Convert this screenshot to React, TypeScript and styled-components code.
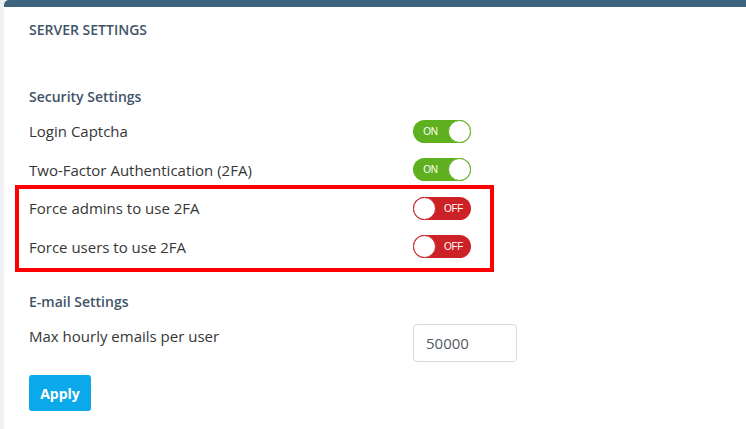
import React from 'react';
import styled, { createGlobalStyle } from 'styled-components';

const GlobalStyle = createGlobalStyle`
  html, body {
    margin: 0;
    padding: 0;
    background: #eef0f1;
  }
  body {
    font-family: 'Open Sans', 'Liberation Sans', sans-serif;
  }
`;

const Page = styled.div`
  width: 746px;
  height: 429px;
  overflow: hidden;
  padding-left: 4px;
  box-sizing: border-box;
`;

const Card = styled.div`
  background: #ffffff;
  border-top: 7px solid #3e6580;
  border-top-left-radius: 5px;
  height: 100%;
  box-sizing: border-box;
  padding: 13px 25px 0 25px;
`;

const Title = styled.h2`
  margin: 0;
  font-size: 14px;
  line-height: 20px;
  font-weight: 600;
  color: #3f5468;
  text-transform: uppercase;
`;

const SectionTitle = styled.h3<{ $gap: number }>`
  margin: ${(p) => p.$gap}px 0 0 0;
  font-size: 14px;
  line-height: 20px;
  font-weight: 600;
  color: #3f5468;
`;

const Rows = styled.div`
  margin-top: 5px;
  display: flex;
  flex-direction: column;
`;

const Row = styled.div`
  display: flex;
  align-items: center;
  height: 38.5px;
`;

const Label = styled.div`
  width: 384px;
  font-size: 15px;
  color: #363636;
`;

const Highlight = styled.div`
  position: relative;

  &::after {
    content: '';
    position: absolute;
    left: -14px;
    top: -4px;
    width: 479px;
    height: 87px;
    border: 4px solid #ff0000;
    box-sizing: border-box;
    pointer-events: none;
  }
`;

const Switch = styled.div<{ $on: boolean }>`
  position: relative;
  width: 58px;
  height: 23px;
  border-radius: 12px;
  background: ${(p) => (p.$on ? '#5fb01e' : '#cc2127')};
  display: flex;
  align-items: center;
  flex-direction: ${(p) => (p.$on ? 'row' : 'row-reverse')};
  box-sizing: border-box;
`;

const SwitchText = styled.span`
  flex: 1;
  text-align: center;
  font-family: 'Liberation Sans', Arial, sans-serif;
  font-size: 10px;
  color: #ffffff;
  letter-spacing: -0.3px;
`;

const Knob = styled.span<{ $on: boolean }>`
  width: 23px;
  height: 23px;
  border-radius: 50%;
  background: #ffffff;
  border: 1px solid ${(p) => (p.$on ? '#5fb01e' : '#cc2127')};
  box-sizing: border-box;
`;

const InputRow = styled.div`
  display: flex;
  align-items: flex-start;
  margin-top: 12px;
`;

const InputLabel = styled(Label)`
  line-height: 20px;
  padding-top: 2px;
`;

const NumberInput = styled.input`
  width: 104px;
  height: 38px;
  box-sizing: border-box;
  border: 1px solid #d4dadf;
  border-radius: 4px;
  padding: 0 12px;
  font-family: 'Open Sans', 'Liberation Sans', sans-serif;
  font-size: 15px;
  color: #555b62;
  outline: none;
`;

const ApplyButton = styled.button`
  margin-top: 13px;
  width: 62px;
  height: 36px;
  border: none;
  border-radius: 3px;
  background: #0ba8ea;
  color: #ffffff;
  font-family: 'Open Sans', 'Liberation Sans', sans-serif;
  font-weight: 700;
  font-size: 14px;
  padding: 0;
`;

const Toggle = ({ on }: { on: boolean }) => (
  <Switch $on={on}>
    <SwitchText>{on ? 'ON' : 'OFF'}</SwitchText>
    <Knob $on={on} />
  </Switch>
);

const SettingRow = ({ label, on }: { label: string; on: boolean }) => (
  <Row>
    <Label>{label}</Label>
    <Toggle on={on} />
  </Row>
);

const App = () => (
  <Page>
    <GlobalStyle />
    <Card>
      <Title>Server Settings</Title>
      <SectionTitle $gap={47}>Security Settings</SectionTitle>
      <Rows>
        <SettingRow label="Login Captcha" on />
        <SettingRow label="Two-Factor Authentication (2FA)" on />
        <Highlight>
          <SettingRow label="Force admins to use 2FA" on={false} />
          <SettingRow label="Force users to use 2FA" on={false} />
        </Highlight>
      </Rows>
      <SectionTitle $gap={26}>E-mail Settings</SectionTitle>
      <InputRow>
        <InputLabel>Max hourly emails per user</InputLabel>
        <NumberInput defaultValue="50000" />
      </InputRow>
      <ApplyButton>Apply</ApplyButton>
    </Card>
  </Page>
);

export default App;
